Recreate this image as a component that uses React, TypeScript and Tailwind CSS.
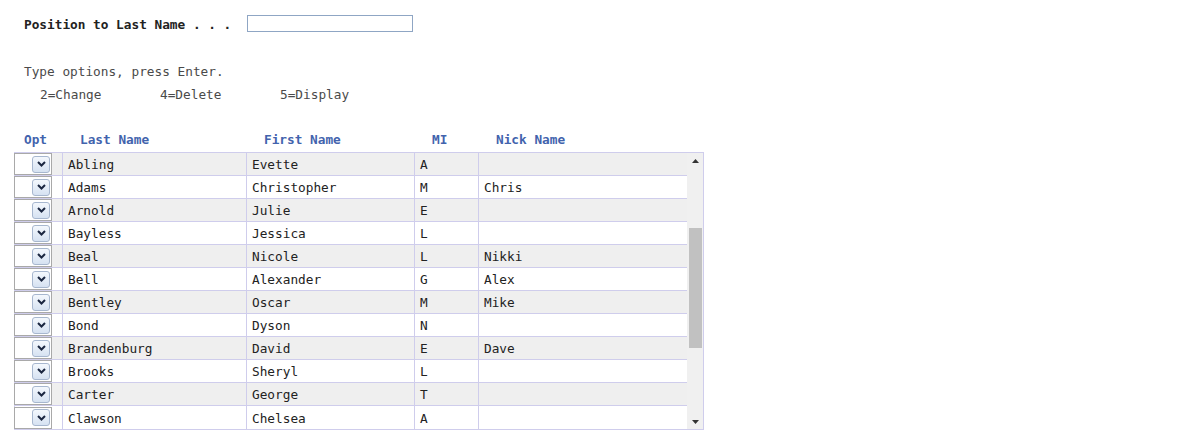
import React from "react";

const rows: [string, string, string, string][] = [
  ["Abling", "Evette", "A", ""],
  ["Adams", "Christopher", "M", "Chris"],
  ["Arnold", "Julie", "E", ""],
  ["Bayless", "Jessica", "L", ""],
  ["Beal", "Nicole", "L", "Nikki"],
  ["Bell", "Alexander", "G", "Alex"],
  ["Bentley", "Oscar", "M", "Mike"],
  ["Bond", "Dyson", "N", ""],
  ["Brandenburg", "David", "E", "Dave"],
  ["Brooks", "Sheryl", "L", ""],
  ["Carter", "George", "T", ""],
  ["Clawson", "Chelsea", "A", ""],
];

function OptSelect() {
  return (
    <div className="-ml-[1px] w-[38px] h-[22px] border border-[#a9a9a9] bg-white flex items-center justify-end pr-[1px]">
      <div className="w-[18px] h-[17px] rounded-[3px] border border-[#a7b7cf] bg-gradient-to-b from-[#f4f8fd] to-[#d6e2f2] flex items-center justify-center">
        <svg width="9" height="6" viewBox="0 0 9 6">
          <path d="M1 1 L4.5 4.5 L8 1" stroke="#1b2741" strokeWidth="2" fill="none" />
        </svg>
      </div>
    </div>
  );
}

export default function App() {
  return (
    <div
      className="w-[1192px] h-[446px] bg-white text-[12.75px] leading-[16px] pt-[15px]"
      style={{ fontFamily: '"DejaVu Sans Mono", "Liberation Mono", monospace' }}
    >
      <div className="flex items-center h-[17px] pl-[24px]">
        <div className="w-[223px] font-bold text-[#222] pt-[2px]">Position to Last Name . . .</div>
        <div className="w-[166px] h-[17px] border border-[#8fa6c4] bg-white" />
      </div>
      <div className="mt-[28px] h-[23px] flex items-center pl-[24px] text-[#4a4a4a]">
        Type options, press Enter.
      </div>
      <div className="h-[23px] flex items-center pl-[40px] text-[#4a4a4a]">
        <div className="w-[120px]">2=Change</div>
        <div className="w-[120px]">4=Delete</div>
        <div>5=Display</div>
      </div>
      <div className="mt-[22px] h-[24px] flex items-center pl-[14px] font-bold text-[#4263ad]">
        <div className="w-[48px] pl-[10px]">Opt</div>
        <div className="w-[184px] pl-[18px]">Last Name</div>
        <div className="w-[168px] pl-[18px]">First Name</div>
        <div className="w-[64px] pl-[18px]">MI</div>
        <div className="w-[208px] pl-[18px]">Nick Name</div>
      </div>
      <div className="ml-[14px] w-[690px] border border-[#cfcdec] flex">
        <div className="w-[672px] flex flex-col">
          {rows.map((r, i) => (
            <div
              key={i}
              className={
                "flex h-[23px] text-[#222] " +
                (i % 2 === 0 ? "bg-[#efefef] " : "bg-white ") +
                (i < rows.length - 1 ? "border-b border-[#cfcdec]" : "")
              }
            >
              <div className="w-[48px] border-r border-[#cfcdec] flex items-center">
                <OptSelect />
              </div>
              <div className="w-[184px] border-r border-[#cfcdec] flex items-center pl-[5px] pt-[2px]">{r[0]}</div>
              <div className="w-[168px] border-r border-[#cfcdec] flex items-center pl-[5px] pt-[2px]">{r[1]}</div>
              <div className="w-[64px] border-r border-[#cfcdec] flex items-center pl-[5px] pt-[2px]">{r[2]}</div>
              <div className="w-[208px] flex items-center pl-[5px] pt-[2px]">{r[3]}</div>
            </div>
          ))}
        </div>
        <div className="w-[16px] bg-[#f0f0f0] flex flex-col">
          <div className="h-[15px] flex items-center justify-center">
            <svg width="7" height="4" viewBox="0 0 7 4">
              <path d="M0 4 L3.5 0 L7 4 Z" fill="#333" />
            </svg>
          </div>
          <div className="mt-[60px] ml-[2px] w-[13px] h-[120px] bg-[#c1c1c1]" />
          <div className="flex-1" />
          <div className="h-[15px] flex items-center justify-center">
            <svg width="7" height="4" viewBox="0 0 7 4">
              <path d="M0 0 L3.5 4 L7 0 Z" fill="#333" />
            </svg>
          </div>
        </div>
      </div>
    </div>
  );
}
